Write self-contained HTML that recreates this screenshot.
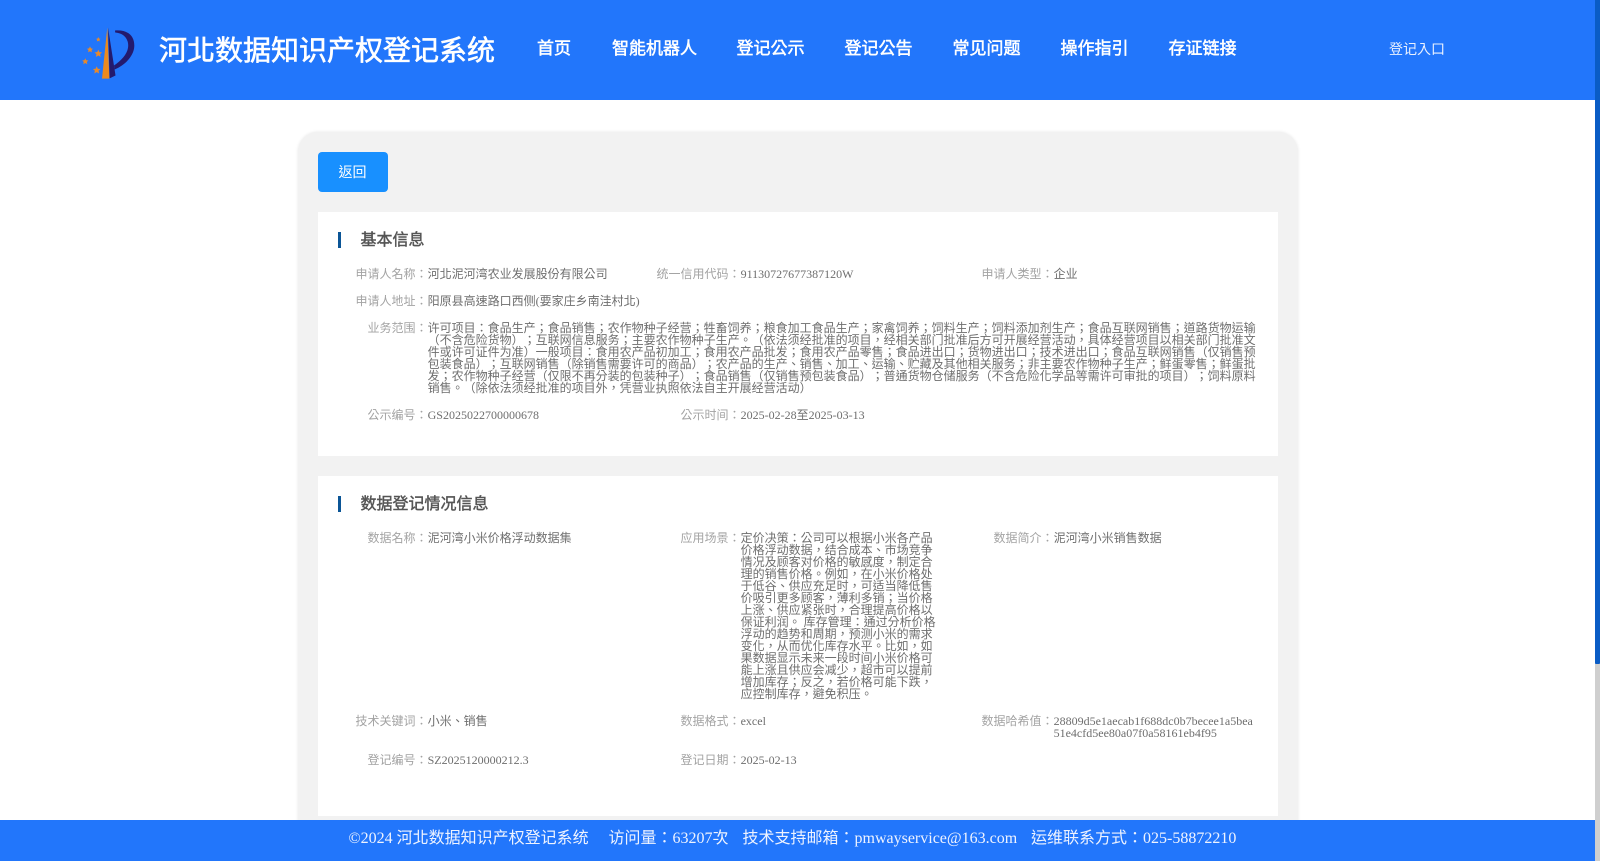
<!DOCTYPE html>
<html>
<head>
<meta charset="utf-8">
<title>河北数据知识产权登记系统</title>
<style>
html,body{margin:0;padding:0;width:1600px;height:861px;overflow:hidden;background:#fff;}
body{font-family:"Liberation Serif","Noto Sans CJK TC",serif;position:relative;text-spacing-trim:space-all;}
.a{position:absolute;white-space:nowrap;}
#hd{position:absolute;left:0;top:0;width:1595px;height:100px;background:#2276fb;}
#ft{position:absolute;left:0;top:820px;width:1595px;height:41px;background:#2276fb;}
#sb{position:absolute;left:1595px;top:0;width:5px;height:861px;background:#cfcfcf;}
#th{position:absolute;left:0;top:0;width:5px;height:664px;background:#0a5cc5;border-radius:0 0 1px 1px;}
.nav{font-family:"Liberation Sans","Noto Sans CJK TC",sans-serif;font-size:17px;font-weight:normal;-webkit-text-stroke:.5px #fff;color:#fff;line-height:20px;top:39px;}
#card{position:absolute;left:298px;top:132px;width:1000px;height:760px;background:#f2f2f2;border-radius:20px;box-shadow:0 0 3px rgba(0,0,0,.1);}
#btn{position:absolute;left:318px;top:152px;width:70px;height:40px;background:#1890ff;border-radius:4px;color:#fff;font-size:14px;line-height:40px;text-align:center;text-indent:-1px;font-family:"Liberation Sans","Noto Sans CJK TC",sans-serif;}
.sec{position:absolute;left:318px;width:960px;background:#fff;}
.bar{position:absolute;left:338px;width:3px;height:16px;background:#0b5596;}
.tt{position:absolute;left:360.5px;font-size:16px;font-weight:normal;-webkit-text-stroke:.45px #555;color:#555;line-height:20px;white-space:nowrap;font-family:"Liberation Sans","Noto Sans CJK TC",sans-serif;}
.l,.v{position:absolute;font-size:12px;line-height:12px;white-space:nowrap;}
.l{color:#a3a3a3;text-align:right;width:100px;margin-left:-.5px;}
.v{color:#6e6e6e;margin-left:-.4px;}
.ftx{font-size:16px;line-height:20px;color:#eef3ff;top:829px;}
</style>
</head>
<body>
<div id="card"></div>
<div id="btn">返回</div>

<div class="sec" style="top:212px;height:244px"></div>
<div class="bar" style="top:232px"></div>
<div class="tt" style="top:231px">基本信息</div>

<div class="l" style="left:328px;top:268px">申请人名称：</div>
<div class="v" style="left:428px;top:268px">河北泥河湾农业发展股份有限公司</div>
<div class="l" style="left:641px;top:268px">统一信用代码：</div>
<div class="v" style="left:741px;top:268px">91130727677387120W</div>
<div class="l" style="left:954px;top:268px">申请人类型：</div>
<div class="v" style="left:1054px;top:268px">企业</div>

<div class="l" style="left:328px;top:295px">申请人地址：</div>
<div class="v" style="left:428px;top:295px">阳原县高速路口西侧(要家庄乡南洼村北)</div>

<div class="l" style="left:328px;top:322px">业务范围：</div>
<div class="v" style="left:428px;top:322px">许可项目：食品生产；食品销售；农作物种子经营；牲畜饲养；粮食加工食品生产；家禽饲养；饲料生产；饲料添加剂生产；食品互联网销售；道路货物运输<br>（不含危险货物）；互联网信息服务；主要农作物种子生产。（依法须经批准的项目，经相关部门批准后方可开展经营活动，具体经营项目以相关部门批准文<br>件或许可证件为准）一般项目：食用农产品初加工；食用农产品批发；食用农产品零售；食品进出口；货物进出口；技术进出口；食品互联网销售（仅销售预<br>包装食品）；互联网销售（除销售需要许可的商品）；农产品的生产、销售、加工、运输、贮藏及其他相关服务；非主要农作物种子生产；鲜蛋零售；鲜蛋批<br>发；农作物种子经营（仅限不再分装的包装种子）；食品销售（仅销售预包装食品）；普通货物仓储服务（不含危险化学品等需许可审批的项目）；饲料原料<br>销售。（除依法须经批准的项目外，凭营业执照依法自主开展经营活动）</div>

<div class="l" style="left:328px;top:409px">公示编号：</div>
<div class="v" style="left:428px;top:409px">GS2025022700000678</div>
<div class="l" style="left:641px;top:409px">公示时间：</div>
<div class="v" style="left:741px;top:409px">2025-02-28至2025-03-13</div>

<div class="sec" style="top:476px;height:340px"></div>
<div class="bar" style="top:496px"></div>
<div class="tt" style="top:495px">数据登记情况信息</div>

<div class="l" style="left:328px;top:532px">数据名称：</div>
<div class="v" style="left:428px;top:532px">泥河湾小米价格浮动数据集</div>
<div class="l" style="left:641px;top:532px">应用场景：</div>
<div class="v" style="left:741px;top:532px">定价决策：公司可以根据小米各产品<br>价格浮动数据，结合成本、市场竞争<br>情况及顾客对价格的敏感度，制定合<br>理的销售价格。例如，在小米价格处<br>于低谷、供应充足时，可适当降低售<br>价吸引更多顾客，薄利多销；当价格<br>上涨、供应紧张时，合理提高价格以<br>保证利润。 库存管理：通过分析价格<br>浮动的趋势和周期，预测小米的需求<br>变化，从而优化库存水平。比如，如<br>果数据显示未来一段时间小米价格可<br>能上涨且供应会减少，超市可以提前<br>增加库存；反之，若价格可能下跌，<br>应控制库存，避免积压。</div>
<div class="l" style="left:954px;top:532px">数据简介：</div>
<div class="v" style="left:1054px;top:532px">泥河湾小米销售数据</div>

<div class="l" style="left:328px;top:715px">技术关键词：</div>
<div class="v" style="left:428px;top:715px">小米、销售</div>
<div class="l" style="left:641px;top:715px">数据格式：</div>
<div class="v" style="left:741px;top:715px">excel</div>
<div class="l" style="left:954px;top:715px">数据哈希值：</div>
<div class="v" style="left:1054px;top:715px">28809d5e1aecab1f688dc0b7becee1a5bea<br>51e4cfd5ee80a07f0a58161eb4f95</div>

<div class="l" style="left:328px;top:754px">登记编号：</div>
<div class="v" style="left:428px;top:754px">SZ2025120000212.3</div>
<div class="l" style="left:641px;top:754px">登记日期：</div>
<div class="v" style="left:741px;top:754px">2025-02-13</div>

<div id="hd">
<svg class="a" style="left:80px;top:24px" width="60" height="58" viewBox="80 24 60 58">
<path d="M107.3 27.5 L102 78.6 L109.4 78.6 Z" fill="#ec8a1e"/>
<path d="M108 27.5 L109.6 78.4 L115.5 75.5 Z" fill="#231a6e"/>
<path d="M115 30.5 C128 29.5 134.5 36 134.3 46 C134 56 125 65 114.6 69.5 L114 65.5 C122 60 128.2 53 128.2 45.5 C128.2 38 123 33 115.2 32.5 Z" fill="#231a6e"/>
<g fill="#e8892a">
<path d="M98.3 37l.7 1.6 1.5.2-1.1 1.1.3 1.6-1.4-.8-1.4.8.3-1.6-1.1-1.1 1.5-.2z"/>
<path d="M90 46.4l.9 2 2.1.3-1.5 1.4.4 2.1-1.9-1-1.9 1 .4-2.1-1.5-1.4 2.1-.3z"/>
<path d="M98.3 49.6l1.1 2.5 2.7.3-2 1.8.6 2.7-2.4-1.4-2.4 1.4.6-2.7-2-1.8 2.7-.3z"/>
<path d="M85.3 58.2l.9 2.1 2.2.2-1.6 1.5.5 2.2-2-1.2-2 1.2.5-2.2-1.6-1.5 2.2-.2z"/>
<path d="M96.7 66.2l1.1 2.5 2.7.3-2 1.8.6 2.7-2.4-1.4-2.4 1.4.6-2.7-2-1.8 2.7-.3z"/>
</g>
</svg>
<div class="a" style="left:159px;top:33px;font-family:'Liberation Sans','Noto Sans CJK TC',sans-serif;font-size:28px;line-height:36px;font-weight:normal;-webkit-text-stroke:.6px #fff;color:#fff;">河北数据知识产权登记系统</div>
<div class="a nav" style="left:537px">首页</div>
<div class="a nav" style="left:612px">智能机器人</div>
<div class="a nav" style="left:736.5px">登记公示</div>
<div class="a nav" style="left:844.5px">登记公告</div>
<div class="a nav" style="left:952.5px">常见问题</div>
<div class="a nav" style="left:1060.5px">操作指引</div>
<div class="a nav" style="left:1168.5px">存证链接</div>
<div class="a" style="left:1389px;top:40px;font-family:'Liberation Sans','Noto Sans CJK TC',sans-serif;font-size:14px;line-height:18px;color:#eaf1ff;">登记入口</div>
</div>

<div id="ft"></div>
<div class="a ftx" style="left:348.5px">©2024 河北数据知识产权登记系统</div>
<div class="a ftx" style="left:608.5px">访问量：63207次</div>
<div class="a ftx" style="left:742.5px">技术支持邮箱：pmwayservice@163.com</div>
<div class="a ftx" style="left:1031px">运维联系方式：025-58872210</div>

<div id="sb"><div id="th"></div></div>
</body>
</html>
